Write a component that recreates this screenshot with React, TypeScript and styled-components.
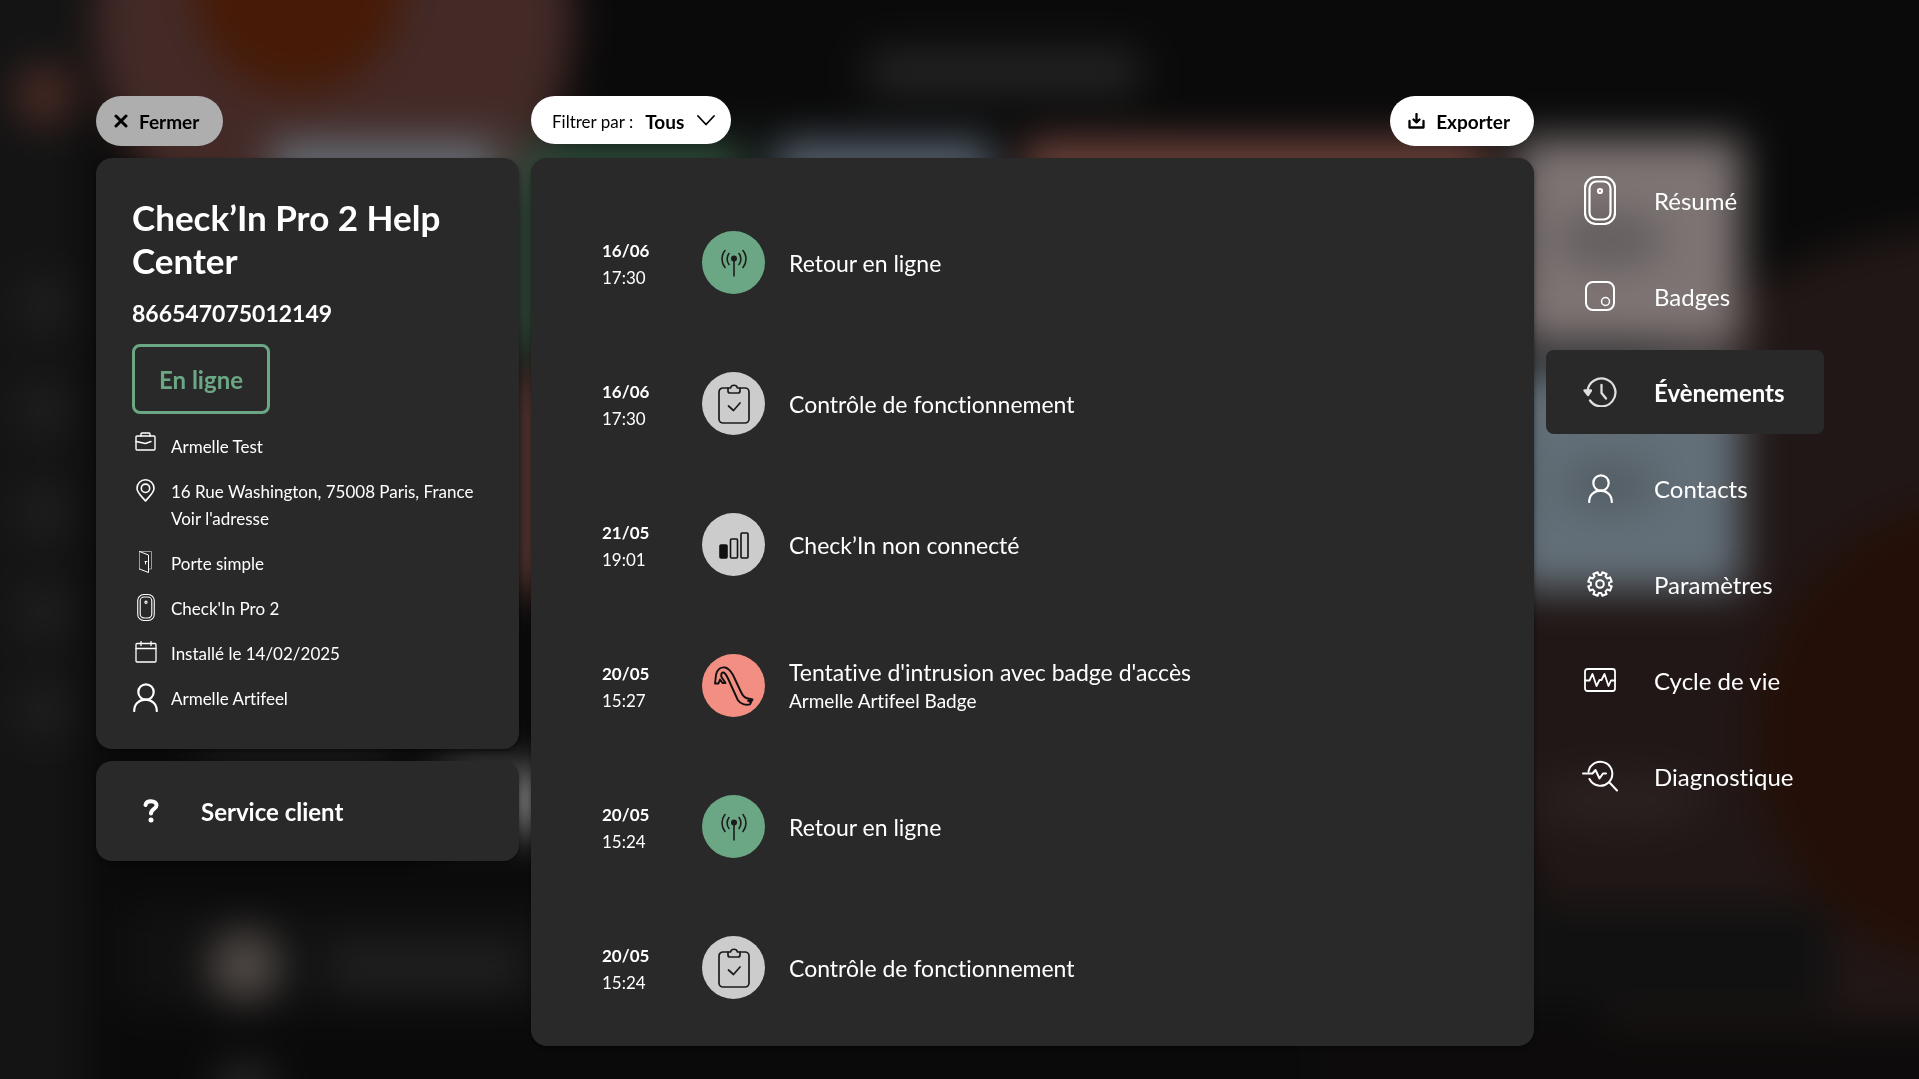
import React from "react";
import styled, { createGlobalStyle } from "styled-components";

const GlobalStyle = createGlobalStyle`
  *, *::before, *::after { box-sizing: border-box; }
  body {
    margin: 0;
    background: #0a0a0a;
    color: #ffffff;
    font-family: Lato, "Open Sans", sans-serif;
    font-size: 17px;
    line-height: 27px;
    font-variant-ligatures: none;
  }
  button, select { font: inherit; color: inherit; }
`;

/* ---------- layout ---------- */

const Backdrop = styled.svg`
  position: fixed;
  inset: 0;
  width: 100%;
  height: 100%;
  z-index: -1;
`;

const Page = styled.div`
  display: grid;
  grid-template-columns: 423px minmax(0, 1fr) 278px;
  gap: 12px;
  height: 100vh;
  padding: 96px 95px 33px 96px;
`;

const Column = styled.div`
  display: flex;
  flex-direction: column;
  gap: 12px;
  min-height: 0;
`;

const Toolbar = styled.header`
  display: flex;
  justify-content: space-between;
  align-items: flex-start;
  height: 50px;
  flex: none;
`;

const Panel = styled.section`
  background: #292929;
  border-radius: 16px;
  box-shadow: 0 2px 4px rgba(0, 0, 0, 0.4);
`;

/* ---------- controls ---------- */

const PillButton = styled.button<{ $muted?: boolean }>`
  display: flex;
  align-items: center;
  gap: 11px;
  height: 50px;
  padding: 0 24px 0 18px;
  border: 0;
  border-radius: 25px;
  background: ${(p) => (p.$muted ? "#aeaeae" : "#ffffff")};
  color: #000000;
  font-size: 19px;
  font-weight: 700;
  cursor: pointer;
`;

const Filter = styled.label`
  display: flex;
  align-items: center;
  gap: 12px;
  height: 48px;
  padding: 2px 16px 0 21px;
  border-radius: 24px;
  background: #ffffff;
  color: #000000;
`;

const FilterSelect = styled.select`
  appearance: none;
  border: 0;
  padding: 0;
  background: transparent;
  font-size: 19px;
  font-weight: 700;
`;

const ServiceButton = styled.button`
  display: flex;
  align-items: center;
  gap: 32px;
  height: 100px;
  padding: 0 37px;
  border: 0;
  border-radius: 16px;
  background: #292929;
  box-shadow: 0 2px 4px rgba(0, 0, 0, 0.4);
  font-size: 24px;
  font-weight: 700;
  cursor: pointer;
`;

/* ---------- device card ---------- */

const DeviceCard = styled(Panel)`
  padding: 38px 36px 37px;
`;

const DeviceName = styled.h1`
  margin: 0;
  font-size: 35px;
  line-height: 43px;
  font-weight: 700;
`;

const Serial = styled.p`
  margin: 16px 0;
  font-size: 23px;
  font-weight: 700;
  line-height: 30px;
`;

const Status = styled.div`
  display: flex;
  align-items: center;
  width: fit-content;
  height: 70px;
  padding: 0 24px;
  border: 3px solid #6ba784;
  border-radius: 8px;
  color: #6ba784;
  font-size: 24px;
  font-weight: 700;
`;

const InfoList = styled.ul`
  display: flex;
  flex-direction: column;
  gap: 18px;
  margin: 19px 0 0;
  padding: 0;
  list-style: none;
`;

const InfoRow = styled.li`
  display: flex;
  gap: 12px;
`;

const InfoIcon = styled.span`
  display: flex;
  justify-content: center;
  align-items: center;
  flex: none;
  width: 27px;
  height: 24px;
  svg { flex: none; }
`;

const InfoText = styled.div`
  display: flex;
  flex-direction: column;
  a { color: inherit; text-decoration: none; }
`;

/* ---------- events ---------- */

const EventsPanel = styled(Panel)`
  flex: 1;
  min-height: 0;
  padding: 34px 71px 8px;
  overflow: hidden;
`;

const EventList = styled.ol`
  margin: 0;
  padding: 0;
  list-style: none;
`;

const EventRow = styled.li`
  display: grid;
  grid-template-columns: 100px 63px 1fr;
  align-items: center;
  height: 141px;
`;

const EventDate = styled.time`
  display: flex;
  flex-direction: column;
  padding-top: 3px;
`;

const EventBadge = styled.span<{ $color: string }>`
  display: flex;
  align-items: center;
  justify-content: center;
  width: 63px;
  height: 63px;
  border-radius: 50%;
  background: ${(p) => p.$color};
`;

const EventText = styled.div`
  display: flex;
  flex-direction: column;
  padding-left: 24px;
`;

const EventTitle = styled.span`
  font-size: 23px;
  line-height: 30px;
`;

const EventDetail = styled.span`
  font-size: 19px;
`;

/* ---------- navigation ---------- */

const Nav = styled.nav`
  display: flex;
  flex-direction: column;
  gap: 12px;
  padding-top: 62px;
`;

const NavLink = styled.a<{ $active?: boolean }>`
  display: flex;
  align-items: center;
  gap: 36px;
  height: 84px;
  padding: 0 36px;
  border-radius: 8px;
  background: ${(p) => (p.$active ? "#292929" : "transparent")};
  color: #ffffff;
  font-size: 24px;
  font-weight: ${(p) => (p.$active ? 700 : 400)};
  text-decoration: none;
`;

const NavIcon = styled.span`
  display: flex;
  justify-content: center;
  flex: none;
  width: 36px;
  svg { flex: none; }
`;

/* ---------- icons ---------- */

type IconProps = { w: number; h: number; box: string; sw?: number; children: React.ReactNode };

const Icon = ({ w, h, box, sw = 2, children }: IconProps) => (
  <svg
    width={w}
    height={h}
    viewBox={box}
    fill="none"
    stroke="currentColor"
    strokeWidth={sw}
    strokeLinecap="round"
    strokeLinejoin="round"
    aria-hidden="true"
  >
    {children}
  </svg>
);

const Device = ({ w, h, sw }: { w: number; h: number; sw: number }) => (
  <Icon w={w} h={h} box="0 0 32 49" sw={sw}>
    <rect x="1" y="1" width="30" height="47" rx="11" />
    <rect x="5.500" y="5.500" width="21" height="38" rx="7" />
    <circle cx="16" cy="15" r="2" />
  </Icon>
);

const Person = () => (
  <Icon w={25} h={29} box="0 0 25 29" sw={2.2}>
    <circle cx="13" cy="9" r="7.700" />
    <path d="M1.200 28C1.200 21 6 16.700 12.500 16.700S23.800 21 23.800 28" />
  </Icon>
);

const gearPath = (() => {
  const points: string[] = [];
  for (let i = 0; i < 8; i++) {
    const a = (i * Math.PI) / 4 - Math.PI / 2 + Math.PI / 8;
    [
      [-0.25, 9.2],
      [-0.19, 12],
      [0.19, 12],
      [0.25, 9.2],
    ].forEach(([d, r]) => {
      points.push(`${(13 + r * Math.cos(a + d)).toFixed(2)} ${(13 + r * Math.sin(a + d)).toFixed(2)}`);
    });
  }
  return `M${points.join("L")}Z`;
})();

const Antenna = () => (
  <Icon w={28} h={28} box="0 0 28 28" sw={1.6}>
    <g stroke="#1c1c1c">
      <circle cx="14" cy="9.500" r="2.200" fill="#1c1c1c" />
      <path d="M14 10V27M9 4.500c-2.500 3-2.500 8 0 11M19 4.500c2.500 3 2.500 8 0 11M5 1.500c-4 5-4 12 0 17M23 1.500c4 5 4 12 0 17" />
    </g>
  </Icon>
);

const Clipboard = () => (
  <Icon w={32} h={40} box="0 0 32 40" sw={1.7}>
    <g stroke="#1c1c1c">
      <path d="M10 4H5a4 4 0 0 0-4 4v27a4 4 0 0 0 4 4h22a4 4 0 0 0 4-4V8a4 4 0 0 0-4-4h-5" />
      <path d="M10 4h2.500a3.600 3.600 0 0 1 7 0H22v3a2 2 0 0 1-2 2h-8a2 2 0 0 1-2-2Z" />
      <path d="M10.500 22l5 4.500L22 19" />
    </g>
  </Icon>
);

const Signal = () => (
  <Icon w={30} h={28} box="0 0 30 28" sw={1.6}>
    <g stroke="#111111">
      <rect x="1" y="14" width="7" height="13" rx="1" fill="#111111" />
      <rect x="11.500" y="8" width="7" height="19" rx="1" />
      <rect x="22" y="2" width="7" height="25" rx="1" />
    </g>
  </Icon>
);

const Crowbar = () => (
  <Icon w={40} h={40} box="0 0 40 40" sw={1.9}>
    <path
      stroke="#111111"
      d="M1 17.500L2 9C3 3 7 .800 11 1.500c4 .700 6 4 8 7.500l8 17c1.500 3.300 3 5.500 6 6.200l5.500 1.300-1 1.800-3.500-.600 3 1.800-1.200 1.900c-4 1-9.500-.400-12-4.400L14 12.500C12.500 9.500 11.500 7 9.500 6.500S6.800 8.500 7.500 11l4 6H8.500L6 13.500l-1.500 4Z"
    />
  </Icon>
);

/* ---------- data ---------- */

const GREEN = "#6ba784";
const GREY = "#cccccc";
const RED = "#f28f82";

const events = [
  { date: "16/06", time: "17:30", color: GREEN, icon: <Antenna />, title: "Retour en ligne" },
  { date: "16/06", time: "17:30", color: GREY, icon: <Clipboard />, title: "Contrôle de fonctionnement" },
  { date: "21/05", time: "19:01", color: GREY, icon: <Signal />, title: "Check’In non connecté" },
  {
    date: "20/05",
    time: "15:27",
    color: RED,
    icon: <Crowbar />,
    title: "Tentative d'intrusion avec badge d'accès",
    detail: "Armelle Artifeel Badge",
  },
  { date: "20/05", time: "15:24", color: GREEN, icon: <Antenna />, title: "Retour en ligne" },
  { date: "20/05", time: "15:24", color: GREY, icon: <Clipboard />, title: "Contrôle de fonctionnement" },
];

const infos = [
  {
    text: "Armelle Test",
    icon: (
      <Icon w={21} h={27} box="0 0 21 27" sw={1.4}>
        <rect x="1" y="4" width="19" height="14" rx="1" />
        <path d="M6 4V2a1 1 0 0 1 1-1h7a1 1 0 0 1 1 1v2M1 9.500l9.500 2L16 9.500" />
      </Icon>
    ),
  },
  {
    text: "16 Rue Washington, 75008 Paris, France",
    link: "Voir l'adresse",
    icon: (
      <Icon w={19} h={23} box="0 0 19 23" sw={1.6}>
        <path d="M9.500 22C6 17.500 1 14 1 9.300a8.500 8.500 0 0 1 17 0C18 14 13 17.500 9.500 22Z" />
        <circle cx="9.500" cy="9.300" r="4.200" />
      </Icon>
    ),
  },
  {
    text: "Porte simple",
    icon: (
      <Icon w={13} h={22} box="0 0 13 22" sw={1}>
        <path d="M.500 18V.500h12V18h-2" stroke="#999999" />
        <path d="M.500 .500l9 3.500v17.500l-9-3.500M6 10.500h2M6.500 10.500v2.500" />
      </Icon>
    ),
  },
  { text: "Check'In Pro 2", icon: <Device w={18} h={27} sw={2} /> },
  {
    text: "Installé le 14/02/2025",
    icon: (
      <Icon w={22} h={22} box="0 0 22 22" sw={1.3}>
        <rect x="1" y="2.500" width="20" height="18.500" rx="1" />
        <path d="M1 7.500h20M6 .600v4M16 .600v4" />
      </Icon>
    ),
  },
  { text: "Armelle Artifeel", icon: <Person /> },
];

const navItems = [
  { label: "Résumé", icon: <Device w={32} h={49} sw={2.2} /> },
  {
    label: "Badges",
    icon: (
      <Icon w={30} h={30} box="0 0 30 30">
        <rect x="1" y="1" width="28" height="28" rx="7" />
        <circle cx="20.500" cy="20.500" r="4" strokeWidth="1.500" />
      </Icon>
    ),
  },
  {
    label: "Évènements",
    active: true,
    icon: (
      <Icon w={34} h={30} box="0 0 34 30" sw={2.3}>
        <g stroke="#dedede">
          <path d="M4.500 14A14 14 0 1 1 7 23.500M18.500 8v8l4.500 5.500" />
          <path d="M1.500 13.500h6.500L5 18Z" fill="#dedede" />
        </g>
      </Icon>
    ),
  },
  { label: "Contacts", icon: <Person /> },
  {
    label: "Paramètres",
    icon: (
      <Icon w={26} h={26} box="0 0 26 26">
        <path d={gearPath} />
        <circle cx="13" cy="13" r="3.800" />
      </Icon>
    ),
  },
  {
    label: "Cycle de vie",
    icon: (
      <Icon w={32} h={24} box="0 0 32 24" sw={1.8}>
        <rect x="1" y="1" width="30" height="22" rx="2.500" />
        <path d="M1 12.500h4.500L8.500 6l4 12 3-6h2L20.500 6l4 12 2.500-5.500h4" />
      </Icon>
    ),
  },
  {
    label: "Diagnostique",
    icon: (
      <Icon w={36} h={32} box="0 0 36 32">
        <path d="M6.500 11.500A12 12 0 1 1 7.500 19M27 22l8 8.500M1 13.500h9.500L13.500 10l4 8.500 3.500-5h3" />
      </Icon>
    ),
  },
];

/* ---------- blurred dashboard behind the overlay ---------- */

const Dashboard = () => (
  <Backdrop viewBox="0 0 1919 1079" preserveAspectRatio="none" aria-hidden="true">
    <defs>
      <filter
        id="soft"
        filterUnits="userSpaceOnUse"
        x="-200"
        y="-200"
        width="2319"
        height="1479"
        colorInterpolationFilters="sRGB"
      >
        <feGaussianBlur stdDeviation="20" />
      </filter>
    </defs>
    <g filter="url(#soft)">
      <rect x="-200" y="-200" width="2319" height="1479" fill="#0a0a0a" />
      <circle cx="1990" cy="715" r="490" fill="#211716" />
      <circle cx="1990" cy="735" r="236" fill="#230f07" />
      <rect x="-200" y="-200" width="286" height="1479" fill="#141414" />
      <circle cx="333" cy="20" r="240" fill="#432a27" />
      <circle cx="298" cy="-12" r="104" fill="#461a06" />
      <circle cx="45" cy="95" r="30" fill="#4c2b25" />
      {[305, 410, 512, 612, 710].map((y) => (
        <circle key={y} cx="45" cy={y} r="28" fill="#1f1f1f" />
      ))}
      <rect x="868" y="50" width="272" height="44" fill="#242424" />
      <rect x="272" y="140" width="224" height="216" fill="#646c74" />
      <rect x="518" y="140" width="226" height="216" fill="#2e4b3a" />
      <rect x="774" y="140" width="218" height="216" fill="#55616d" />
      <rect x="1024" y="140" width="464" height="216" fill="#6f443c" />
      <rect x="518" y="372" width="226" height="220" fill="#633e38" />
      <rect x="1516" y="138" width="226" height="208" fill="#7e7474" />
      <ellipse cx="1610" cy="240" rx="56" ry="26" fill="#615c5c" />
      <rect x="1508" y="368" width="234" height="222" fill="#636f78" />
      <ellipse cx="1610" cy="485" rx="50" ry="26" fill="#525c63" />
      <rect x="200" y="745" width="190" height="16" fill="#2a2a2a" />
      <rect x="440" y="768" width="210" height="64" fill="#666666" />
      <ellipse cx="1620" cy="800" rx="90" ry="26" fill="#2a2120" />
      <rect x="120" y="905" width="1710" height="105" fill="#111111" />
      <rect x="1300" y="1024" width="800" height="200" fill="#0d0b0b" />
      <circle cx="245" cy="966" r="36" fill="#524b48" />
      <rect x="330" y="944" width="190" height="46" fill="#202020" />
      <circle cx="245" cy="1090" r="30" fill="#262626" />
    </g>
  </Backdrop>
);

export default function App() {
  return (
    <>
      <GlobalStyle />
      <Dashboard />
      <Page>
        <Column>
          <Toolbar>
            <PillButton $muted type="button">
              <Icon w={14} h={14} box="0 0 14 14" sw={3}>
                <path d="M2 2l10 10M12 2L2 12" />
              </Icon>
              Fermer
            </PillButton>
          </Toolbar>
          <DeviceCard>
            <DeviceName>Check’In Pro 2 Help Center</DeviceName>
            <Serial>866547075012149</Serial>
            <Status>En ligne</Status>
            <InfoList>
              {infos.map((info) => (
                <InfoRow key={info.text}>
                  <InfoIcon>{info.icon}</InfoIcon>
                  <InfoText>
                    <span>{info.text}</span>
                    {info.link && <a href="#adresse">{info.link}</a>}
                  </InfoText>
                </InfoRow>
              ))}
            </InfoList>
          </DeviceCard>
          <ServiceButton type="button">
            <NavIcon>
              <Icon w={16} h={24} box="0 0 16 24" sw={4}>
                <path d="M2.500 6C3 3.500 5 2.300 8 2.300c3.300 0 5.500 1.700 5.500 4.200 0 3.500-5.500 3.500-5.500 8" />
                <path d="M8 21v.100" strokeWidth="5" />
              </Icon>
            </NavIcon>
            Service client
          </ServiceButton>
        </Column>

        <Column>
          <Toolbar>
            <Filter>
              Filtrer par :
              <FilterSelect defaultValue="tous">
                <option value="tous">Tous</option>
              </FilterSelect>
              <Icon w={18} h={12} box="0 0 18 12" sw={1.8}>
                <path d="M1 1l8 8.500L17 1" />
              </Icon>
            </Filter>
            <PillButton type="button">
              <Icon w={17} h={16} box="0 0 17 16" sw={2.3}>
                <path d="M1.500 8v6.500h14V8M8.500 1v8M5.500 6.500l3 3 3-3" />
              </Icon>
              Exporter
            </PillButton>
          </Toolbar>
          <EventsPanel>
            <EventList>
              {events.map((event, i) => (
                <EventRow key={i}>
                  <EventDate>
                    <strong>{event.date}</strong>
                    {event.time}
                  </EventDate>
                  <EventBadge $color={event.color}>{event.icon}</EventBadge>
                  <EventText>
                    <EventTitle>{event.title}</EventTitle>
                    {event.detail && <EventDetail>{event.detail}</EventDetail>}
                  </EventText>
                </EventRow>
              ))}
            </EventList>
          </EventsPanel>
        </Column>

        <Nav>
          {navItems.map((item) => (
            <NavLink key={item.label} href={`#${item.label}`} $active={item.active}>
              <NavIcon>{item.icon}</NavIcon>
              {item.label}
            </NavLink>
          ))}
        </Nav>
      </Page>
    </>
  );
}
